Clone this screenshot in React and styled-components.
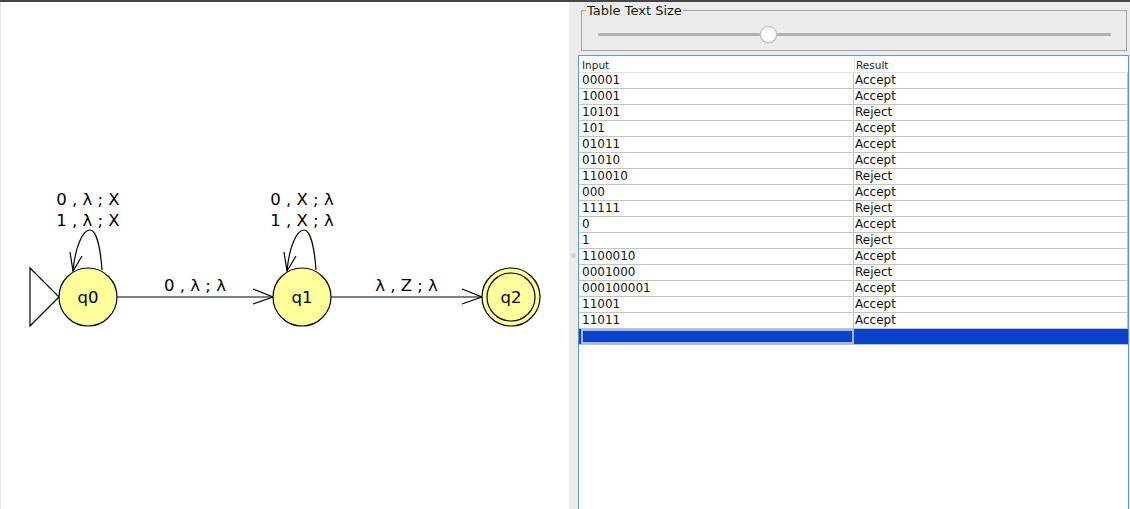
import React from "react";
import styled, { createGlobalStyle } from "styled-components";

const Global = createGlobalStyle`
  html, body { margin: 0; padding: 0; background: #ffffff; }
  body { font-family: "DejaVu Sans", "Liberation Sans", sans-serif; overflow: hidden; }
  * { box-sizing: border-box; }
`;

const Window = styled.div`
  width: 1130px;
  height: 509px;
  display: flex;
  flex-direction: column;
`;

const TopBar = styled.div`
  height: 2px;
  background: #454545;
  flex: none;
`;

const Main = styled.div`
  flex: 1;
  display: flex;
  min-height: 0;
`;

const Canvas = styled.div`
  width: 569px;
  flex: none;
  background: #ffffff;
  border-left: 1px solid #e4e4e4;
  display: flex;
`;

const Splitter = styled.div`
  width: 9px;
  flex: none;
  background: #ececec;
  display: flex;
  flex-direction: column;
  justify-content: center;
  align-items: center;
  padding-bottom: 1px;
`;

const Grip = styled.div`
  width: 5px;
  height: 5px;
  border-radius: 50%;
  background: #d2d2d2;
`;

const Side = styled.div`
  width: 552px;
  flex: none;
  background: #ececec;
  display: flex;
  flex-direction: column;
`;

const Group = styled.fieldset`
  margin: 1px 3px 4px 3px;
  padding: 0 0 7px 0;
  border: 1px solid #a4a4a4;
  min-width: 0;
`;

const GroupTitle = styled.legend`
  margin-left: 4px;
  padding: 0 1px;
  font-size: 13px;
  line-height: 15px;
  color: #1a1a1a;
`;

const SliderRow = styled.div`
  margin: 8px 15px 0 16px;
  height: 17px;
  display: flex;
  align-items: center;
`;

const Track = styled.div`
  height: 3px;
  background: #b0b0b0;
  border-radius: 1px;
  flex: ${(p) => p.$grow};
`;

const Knob = styled.div`
  width: 17px;
  height: 17px;
  flex: none;
  border-radius: 50%;
  background: #ffffff;
  border: 1px solid #b4b4b4;
  box-shadow: 0 0.5px 1px rgba(0, 0, 0, 0.18);
`;

const Table = styled.div`
  flex: 1;
  margin-right: 1px;
  background: #ffffff;
  border: 1px solid #5c9bd8;
  border-bottom: none;
  display: flex;
  flex-direction: column;
`;

const Row = styled.div`
  display: grid;
  grid-template-columns: 275px 274px;
  height: ${(p) => (p.$head ? 17 : 16)}px;
  border-bottom: 1px solid ${(p) => (p.$head ? "#e2e2e2" : "#c3c3c3")};
  background: ${(p) => (p.$selected ? "#0b43cd" : "#ffffff")};
`;

const HeadCell = styled.div`
  font-size: 10.5px;
  line-height: 12px;
  color: #222;
  display: flex;
  align-items: center;
  border-left: ${(p) => (p.$first ? "none" : "1px solid #dadada")};
  margin: ${(p) => (p.$first ? "1px 0 0" : "2px 0 1px")};
  padding-left: ${(p) => (p.$first ? 3 : 1)}px;
`;

const Cell = styled.div`
  font-size: 12px;
  line-height: 15px;
  padding-left: ${(p) => (p.$first ? 3 : 1)}px;
  color: #111;
  white-space: nowrap;
  overflow: hidden;
  border-right: 1px solid #c3c3c3;
`;

const FocusCell = styled.div`
  border: 2px solid #a6bce6;
  margin-left: 2px;
  background: #0b43cd;
`;

const SelCell = styled.div`
  background: #0b43cd;
`;

const rows = [
  ["00001", "Accept"],
  ["10001", "Accept"],
  ["10101", "Reject"],
  ["101", "Accept"],
  ["01011", "Accept"],
  ["01010", "Accept"],
  ["110010", "Reject"],
  ["000", "Accept"],
  ["11111", "Reject"],
  ["0", "Accept"],
  ["1", "Reject"],
  ["1100010", "Accept"],
  ["0001000", "Reject"],
  ["000100001", "Accept"],
  ["11001", "Accept"],
  ["11011", "Accept"],
];

const StateFill = "#ffff9c";

function Loop({ cx, cy, top, bottom }) {
  const d = `M ${cx + 14} ${cy - 27} C ${cx + 12} ${cy - 55}, ${cx + 7} ${cy - 67}, ${cx + 2} ${cy - 67} C ${cx - 6} ${cy - 67}, ${cx - 13} ${cy - 48}, ${cx - 15} ${cy - 26}`;
  return (
    <g>
      <path d={d} fill="none" stroke="#000" strokeWidth="1.2" />
      <polyline
        points={`${cx - 18},${cy - 45} ${cx - 15},${cy - 26} ${cx - 6},${cy - 41}`}
        fill="none"
        stroke="#000"
        strokeWidth="1.2"
      />
      <text x={cx} y={cy - 92} textAnchor="middle" fontSize="16.5">
        {top}
      </text>
      <text x={cx} y={cy - 71} textAnchor="middle" fontSize="16.5">
        {bottom}
      </text>
    </g>
  );
}

function Arrow({ x1, x2, y, label }) {
  return (
    <g>
      <line x1={x1} y1={y} x2={x2} y2={y} stroke="#000" strokeWidth="1.2" />
      <polyline
        points={`${x2 - 20},${y - 8} ${x2},${y} ${x2 - 20},${y + 7}`}
        fill="none"
        stroke="#000"
        strokeWidth="1.2"
      />
      <text x={(x1 + x2) / 2} y={y - 6} textAnchor="middle" fontSize="16.5">
        {label}
      </text>
    </g>
  );
}

function State({ cx, cy, name, final }) {
  return (
    <g>
      <circle cx={cx} cy={cy} r="29" fill={StateFill} stroke="#000" strokeWidth="1.2" />
      {final && <circle cx={cx} cy={cy} r="24" fill="none" stroke="#000" strokeWidth="1.2" />}
      <text x={cx} y={cy + 6} textAnchor="middle" fontSize="16.5">
        {name}
      </text>
    </g>
  );
}

function Diagram() {
  const y = 297;
  return (
    <svg
      width="568"
      height="507"
      viewBox="1 2 568 507"
      fontFamily="DejaVu Sans, sans-serif"
    >
      <Loop cx={88} cy={y} top="0 , λ ; X" bottom="1 , λ ; X" />
      <Loop cx={302} cy={y} top="0 , X ; λ" bottom="1 , X ; λ" />
      <Arrow x1={117} x2={273} y={y} label="0 , λ ; λ" />
      <Arrow x1={331} x2={482} y={y} label="λ , Z ; λ" />
      <polygon
        points={`30,${y - 29} 59,${y} 30,${y + 29}`}
        fill="#fff"
        stroke="#000"
        strokeWidth="1.2"
      />
      <State cx={88} cy={y} name="q0" />
      <State cx={302} cy={y} name="q1" />
      <State cx={511} cy={y} name="q2" final />
    </svg>
  );
}

export default function App() {
  const value = 0.327;
  return (
    <Window>
      <Global />
      <TopBar />
      <Main>
        <Canvas>
          <Diagram />
        </Canvas>
        <Splitter>
          <Grip />
        </Splitter>
        <Side>
          <Group>
            <GroupTitle>Table Text Size</GroupTitle>
            <SliderRow>
              <Track $grow={value} />
              <Knob />
              <Track $grow={1 - value} />
            </SliderRow>
          </Group>
          <Table>
            <Row $head>
              <HeadCell $first>Input</HeadCell>
              <HeadCell>Result</HeadCell>
            </Row>
            {rows.map(([input, result], i) => (
              <Row key={i}>
                <Cell $first>{input}</Cell>
                <Cell>{result}</Cell>
              </Row>
            ))}
            <Row $selected>
              <FocusCell />
              <SelCell />
            </Row>
          </Table>
        </Side>
      </Main>
    </Window>
  );
}
